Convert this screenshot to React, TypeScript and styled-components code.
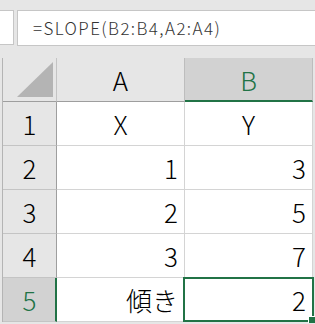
import React from 'react';
import styled, { createGlobalStyle } from 'styled-components';

const GREEN = '#217346';

const GlobalStyle = createGlobalStyle`
  html, body {
    margin: 0;
    padding: 0;
    background: #e6e6e6;
  }
  body {
    width: 315px;
    height: 324px;
    overflow: hidden;
    font-family: "Noto Sans CJK JP", "Liberation Sans", sans-serif;
  }
`;

const Page = styled.div`
  width: 315px;
  height: 324px;
  background: #e6e6e6;
  overflow: hidden;
  padding-top: 10px;
  box-sizing: border-box;
`;

const FormulaRow = styled.div`
  display: flex;
  align-items: flex-start;
  gap: 3px;
  height: 36px;
`;

const NameBox = styled.div`
  width: 14px;
  height: 35px;
  box-sizing: border-box;
  background: #fff;
  border: 1px solid #c6c6c6;
  border-left: none;
`;

const FormulaBox = styled.div`
  flex: 1;
  height: 36px;
  box-sizing: border-box;
  background: #fff;
  border: 1px solid #c6c6c6;
  border-right: none;
  padding-left: 15px;
  padding-bottom: 2px;
  display: flex;
  align-items: center;
  font-size: 17px;
  font-weight: 300;
  letter-spacing: 1.4px;
  color: #333;
  white-space: nowrap;
`;

const Sheet = styled.div`
  position: relative;
  margin-top: 12px;
  margin-left: 2px;
  border-left: 1px solid #b4b4b4;
  display: grid;
  grid-template-columns: 54px 128px 128px;
  grid-auto-rows: 44px;
  width: 310px;
`;

const Corner = styled.div`
  box-sizing: border-box;
  background: #e6e6e6;
  border-right: 1px solid #c4c4c4;
  border-bottom: 1px solid #9e9e9e;
  display: flex;
  align-items: flex-end;
  justify-content: flex-end;
  padding: 0 3px 4px 0;

  svg {
    display: block;
  }
`;

const ColHead = styled.div<{ $active?: boolean }>`
  box-sizing: border-box;
  background: ${p => (p.$active ? '#d2d2d2' : '#e6e6e6')};
  color: ${p => (p.$active ? GREEN : '#000')};
  border-right: 1px solid #bdbdbd;
  border-bottom: ${p => (p.$active ? `2px solid ${GREEN}` : '1px solid #9e9e9e')};
  display: flex;
  align-items: center;
  justify-content: center;
  font-size: 26px;
  font-weight: 300;
  padding-top: ${p => (p.$active ? '1px' : '0')};
`;

const RowHead = styled.div<{ $active?: boolean }>`
  box-sizing: border-box;
  background: ${p => (p.$active ? '#d2d2d2' : '#e6e6e6')};
  color: ${p => (p.$active ? GREEN : '#000')};
  border-right: ${p => (p.$active ? `2px solid ${GREEN}` : '1px solid #9e9e9e')};
  border-bottom: 1px solid #c4c4c4;
  display: flex;
  align-items: center;
  justify-content: center;
  font-size: 26px;
  font-weight: 300;
  padding-left: ${p => (p.$active ? '1px' : '0')};
`;

const Cell = styled.div<{ $align?: 'left' | 'center' | 'right' }>`
  box-sizing: border-box;
  background: #fff;
  color: #000;
  border-right: 1px solid #d4d4d4;
  border-bottom: 1px solid #d4d4d4;
  display: flex;
  align-items: center;
  justify-content: ${p =>
    p.$align === 'center' ? 'center' : p.$align === 'left' ? 'flex-start' : 'flex-end'};
  padding: 0 6px;
  font-size: 26px;
  font-weight: 300;
  white-space: nowrap;
`;

const Selection = styled.div`
  position: absolute;
  left: 180px;
  top: 219px;
  width: 131px;
  height: 45px;
  box-sizing: border-box;
  border: 2px solid ${GREEN};
  pointer-events: none;
`;

const FillHandle = styled.div`
  position: absolute;
  right: -3px;
  bottom: -3px;
  width: 6px;
  height: 6px;
  background: ${GREEN};
  border-left: 1px solid #fff;
  border-top: 1px solid #fff;
`;

const rows: { n: number; a: string; b: string; aAlign?: 'center' | 'right'; bAlign?: 'center' | 'right' }[] = [
  { n: 1, a: 'X', b: 'Y', aAlign: 'center', bAlign: 'center' },
  { n: 2, a: '1', b: '3' },
  { n: 3, a: '2', b: '5' },
  { n: 4, a: '3', b: '7' },
  { n: 5, a: '傾き', b: '2' },
];

export default function App() {
  return (
    <>
      <GlobalStyle />
      <Page>
        <FormulaRow>
          <NameBox />
          <FormulaBox>=SLOPE(B2:B4,A2:A4)</FormulaBox>
        </FormulaRow>
        <Sheet>
          <Corner>
            <svg width="36" height="35" viewBox="0 0 36 35">
              <polygon points="0,35 36,0 36,35" fill="#b4b4b4" />
            </svg>
          </Corner>
          <ColHead>A</ColHead>
          <ColHead $active>B</ColHead>
          {rows.map(r => (
            <React.Fragment key={r.n}>
              <RowHead $active={r.n === 5}>{r.n}</RowHead>
              <Cell $align={r.aAlign}>{r.a}</Cell>
              <Cell $align={r.bAlign}>{r.b}</Cell>
            </React.Fragment>
          ))}
          <Selection>
            <FillHandle />
          </Selection>
        </Sheet>
      </Page>
    </>
  );
}
